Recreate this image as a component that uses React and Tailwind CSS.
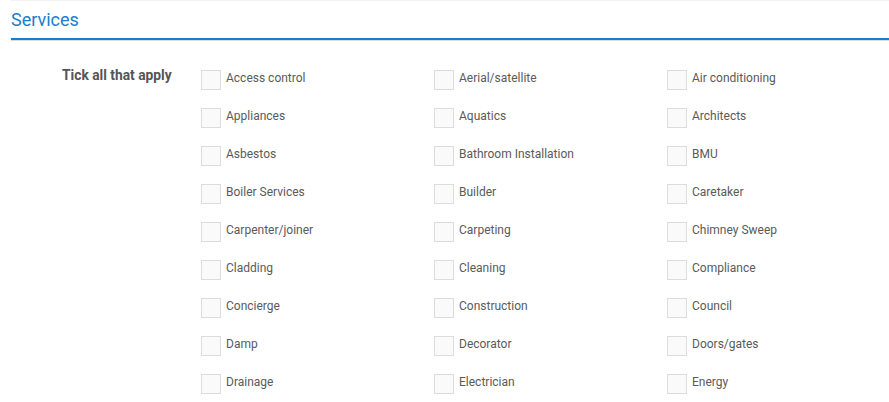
import React from "react";

const services = [
  "Access control", "Aerial/satellite", "Air conditioning",
  "Appliances", "Aquatics", "Architects",
  "Asbestos", "Bathroom Installation", "BMU",
  "Boiler Services", "Builder", "Caretaker",
  "Carpenter/joiner", "Carpeting", "Chimney Sweep",
  "Cladding", "Cleaning", "Compliance",
  "Concierge", "Construction", "Council",
  "Damp", "Decorator", "Doors/gates",
  "Drainage", "Electrician", "Energy",
];

const ServiceCheck = ({ label }) => (
  <label className="flex items-start cursor-pointer">
    <span className="w-5 h-5 shrink-0 border border-[#dcdcdc] bg-[#fafafa]"></span>
    <span className="ml-[5px] text-[12px] leading-4 text-[#5a5a5a] whitespace-nowrap">{label}</span>
  </label>
);

export default function App() {
  return (
    <div className="w-[889px] h-[402px] overflow-hidden bg-white font-['Roboto',sans-serif] pl-[11px]">
      <div className="border-t border-[#f2f2f2]">
        <div className="h-[39px] border-b-2 border-[#1b7dca] flex items-start pt-[8px]">
          <h2 className="text-[18px] leading-[22px] text-[#1b7dca] font-normal">Services</h2>
        </div>
        <div className="h-px bg-[#dcdcdc]"></div>
      </div>

      <div className="flex pt-[29px]">
        <div className="w-[190px] pl-[51px] shrink-0">
          <p className="-mt-[3px] text-[13.8px] leading-4 font-bold text-[#555555]">Tick all that apply</p>
        </div>
        <div className="grid grid-cols-[233px_233px_233px] gap-y-[18px]">
          {services.map((s) => (
            <ServiceCheck key={s} label={s} />
          ))}
        </div>
      </div>
    </div>
  );
}
